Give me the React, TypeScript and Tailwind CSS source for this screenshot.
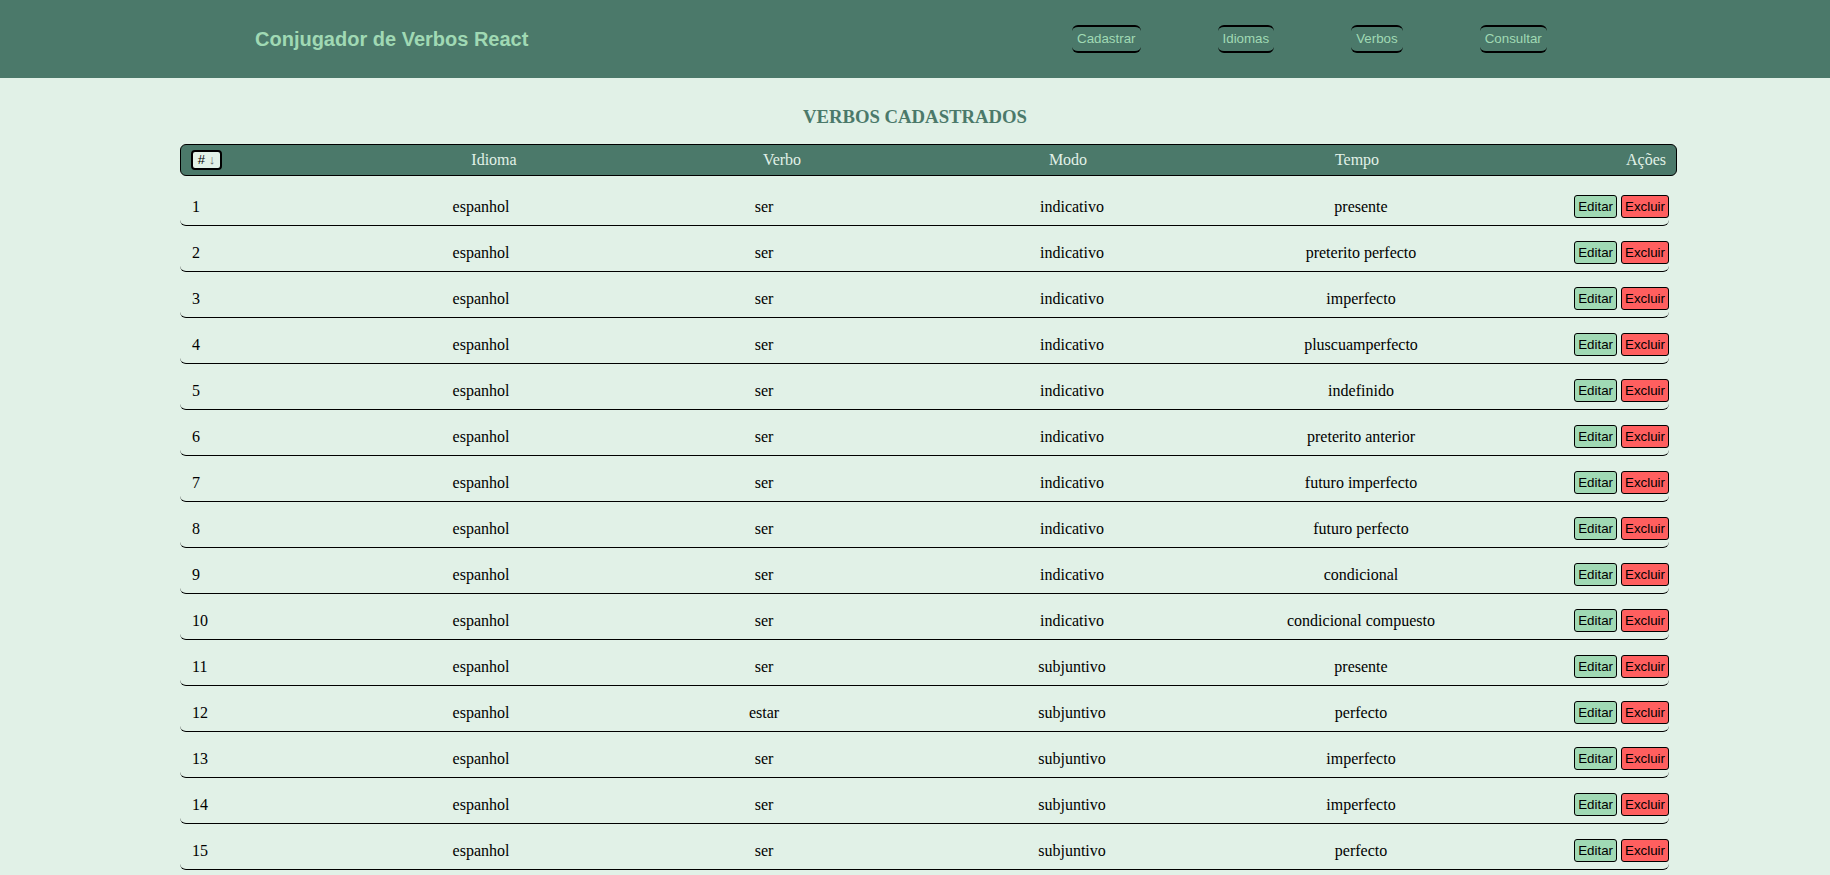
import React from "react";

const verbos = [
  { id: 1, idioma: "espanhol", verbo: "ser", modo: "indicativo", tempo: "presente" },
  { id: 2, idioma: "espanhol", verbo: "ser", modo: "indicativo", tempo: "preterito perfecto" },
  { id: 3, idioma: "espanhol", verbo: "ser", modo: "indicativo", tempo: "imperfecto" },
  { id: 4, idioma: "espanhol", verbo: "ser", modo: "indicativo", tempo: "pluscuamperfecto" },
  { id: 5, idioma: "espanhol", verbo: "ser", modo: "indicativo", tempo: "indefinido" },
  { id: 6, idioma: "espanhol", verbo: "ser", modo: "indicativo", tempo: "preterito anterior" },
  { id: 7, idioma: "espanhol", verbo: "ser", modo: "indicativo", tempo: "futuro imperfecto" },
  { id: 8, idioma: "espanhol", verbo: "ser", modo: "indicativo", tempo: "futuro perfecto" },
  { id: 9, idioma: "espanhol", verbo: "ser", modo: "indicativo", tempo: "condicional" },
  { id: 10, idioma: "espanhol", verbo: "ser", modo: "indicativo", tempo: "condicional compuesto" },
  { id: 11, idioma: "espanhol", verbo: "ser", modo: "subjuntivo", tempo: "presente" },
  { id: 12, idioma: "espanhol", verbo: "estar", modo: "subjuntivo", tempo: "perfecto" },
  { id: 13, idioma: "espanhol", verbo: "ser", modo: "subjuntivo", tempo: "imperfecto" },
  { id: 14, idioma: "espanhol", verbo: "ser", modo: "subjuntivo", tempo: "imperfecto" },
  { id: 15, idioma: "espanhol", verbo: "ser", modo: "subjuntivo", tempo: "perfecto" },
];

const navItems = ["Cadastrar", "Idiomas", "Verbos", "Consultar"];

export default function App() {
  return (
    <div className="h-[875px] overflow-hidden bg-[#e1f1e7] font-['Liberation_Serif',serif] text-black">

      {/* NavBar */}
      <header className="h-[78px] bg-[#4b796a] flex items-center">
        <h1 className="ml-[255px] w-[817px] font-['Liberation_Sans',Arial,sans-serif] font-bold text-[20px] text-[#a0d9b4]">
          Conjugador de Verbos React
        </h1>
        <nav className="flex gap-[77px]">
          {navItems.map((item) => (
            <button
              key={item}
              className="h-[28px] px-[5px] border-y-2 border-black rounded-md font-['Liberation_Sans',Arial,sans-serif] text-[13.33px] text-[#a0d9b4]"
            >
              {item}
            </button>
          ))}
        </nav>
      </header>

      {/* Lista de verbos */}
      <main>
        <h3 className="mt-[28px] mb-[16px] text-center font-bold text-[18.72px] leading-[22px] text-[#4b796a]">
          VERBOS CADASTRADOS
        </h3>

        <div className="ml-[180px] w-[1497px]">
          <div className="h-[32px] border border-black rounded-md bg-[#4b796a] grid grid-cols-[159px_308px_268px_304px_274px_182px] items-center text-[16px] text-[#e1f1e7]">
            <div className="pl-[10px]">
              <button className="h-[20px] w-[31px] border-2 border-black rounded-[4px] bg-[#e1f1e7] font-['Liberation_Sans',Arial,sans-serif] text-[13px] leading-[14px] text-black flex items-center justify-center gap-[4px]">
                <span>#</span>
                <span className="text-[#666]">↓</span>
              </button>
            </div>
            <div className="text-center">Idioma</div>
            <div className="text-center">Verbo</div>
            <div className="text-center">Modo</div>
            <div className="text-center">Tempo</div>
            <div className="text-right pr-[10px]">Ações</div>
          </div>

          <div className="mt-[12px] flex flex-col gap-[8px]">
            {verbos.map((v) => (
              <div
                key={v.id}
                className="w-[1489px] h-[38px] border-b border-black rounded-md grid grid-cols-[150px_302px_264px_352px_226px_195px] items-center text-[16px]"
              >
                <div className="pl-[12px]">{v.id}</div>
                <div className="text-center">{v.idioma}</div>
                <div className="text-center">{v.verbo}</div>
                <div className="text-center">{v.modo}</div>
                <div className="text-center">{v.tempo}</div>
                <div className="flex justify-end gap-[4px] font-['Liberation_Sans',Arial,sans-serif] text-[13.33px]">
                  <button className="h-[23px] px-[3px] border border-black rounded-[3px] bg-[#a0d9b4]">Editar</button>
                  <button className="h-[23px] px-[3px] border border-black rounded-[3px] bg-[#ff5f5f]">Excluir</button>
                </div>
              </div>
            ))}
          </div>
        </div>
      </main>
    </div>
  );
}
